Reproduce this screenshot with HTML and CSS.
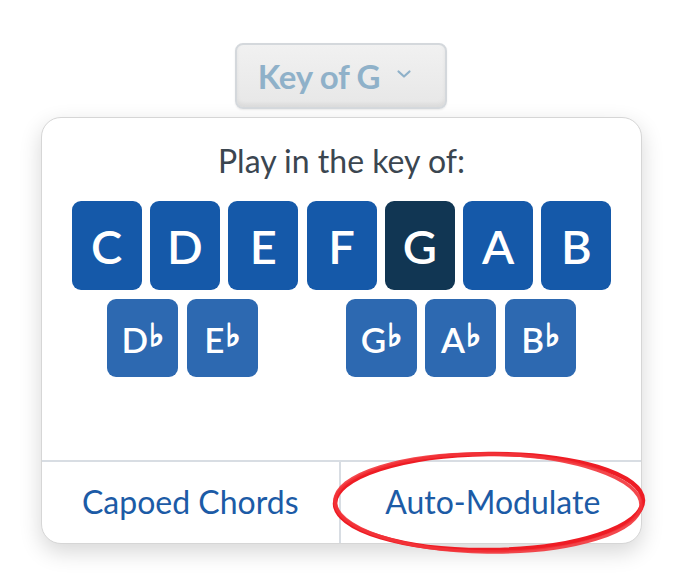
FILE: index.html
```html
<!DOCTYPE html>
<html>
<head>
<meta charset="utf-8">
<link rel="stylesheet" href="styles.css">
</head>
<body>
<div class="page">
  <div class="top">
    <div class="keybtn">
      <span class="keybtn-label">Key of G</span>
      <svg class="chev" width="16" height="10" viewBox="0 0 16 10"><path d="M2.5 2.5 L8 7.5 L13.5 2.5" fill="none" stroke="#8fb1c9" stroke-width="2.2" stroke-linecap="round" stroke-linejoin="round"/></svg>
    </div>
  </div>
  <div class="card">
    <div class="title">Play in the key of:</div>
    <div class="row row1">
      <div class="key">C</div>
      <div class="key">D</div>
      <div class="key">E</div>
      <div class="key">F</div>
      <div class="key active">G</div>
      <div class="key">A</div>
      <div class="key">B</div>
    </div>
    <div class="row row2">
      <div class="key flat">D<span class="fl">♭</span></div>
      <div class="key flat">E<span class="fl">♭</span></div>
      <div class="spacer"></div>
      <div class="key flat">G<span class="fl">♭</span></div>
      <div class="key flat">A<span class="fl">♭</span></div>
      <div class="key flat">B<span class="fl">♭</span></div>
    </div>
    <div class="footer">
      <div class="opt">Capoed Chords</div>
      <div class="opt opt-right">Auto-Modulate</div>
    </div>
  </div>
  <svg class="circle" width="330" height="120" viewBox="0 0 330 120">
    <ellipse cx="165" cy="60" rx="154" ry="48" fill="none" stroke="#ee1c24" stroke-width="4.5" transform="rotate(-0.6 165 60)"/>
    <ellipse cx="164" cy="61" rx="153" ry="49" fill="none" stroke="#f2343a" stroke-width="3.5" transform="rotate(0.8 165 60)" opacity="0.9"/>
  </svg>
</div>
</body>
</html>
```
FILE: styles.css
```css
html, body {
  margin: 0;
  padding: 0;
  background: #ffffff;
}
.page {
  position: relative;
  width: 682px;
  height: 584px;
  font-family: Lato, "Noto Sans", sans-serif;
}
.top {
  display: flex;
  justify-content: center;
  padding-top: 43px;
}
.keybtn {
  box-sizing: border-box;
  width: 212px;
  height: 66px;
  border: 2px solid #d4d8dc;
  border-radius: 8px;
  background: linear-gradient(#f1f1f1, #e7e7e7);
  box-shadow: inset 0 -3px 4px rgba(0,0,0,0.06), 0 1px 2px rgba(0,0,0,0.08);
  display: flex;
  align-items: center;
  justify-content: center;
  gap: 16px;
  padding-right: 12px;
}
.keybtn-label {
  font-weight: 700;
  font-size: 33px;
  color: #8fb1c9;
  letter-spacing: -0.3px;
}
.chev {
  margin-top: -4px;
}
.card {
  box-sizing: border-box;
  width: 601px;
  height: 427px;
  margin: 8px 0 0 41px;
  border: 1px solid #d6d6d6;
  border-radius: 20px;
  background: #fff;
  box-shadow: 0 8px 22px rgba(0,0,0,0.16);
  display: flex;
  flex-direction: column;
  align-items: center;
}
.title {
  margin-top: 24px;
  font-size: 32px;
  line-height: 38px;
  color: #3b4650;
}
.row {
  display: flex;
  gap: 8.3px;
}
.row1 {
  margin-top: 21px;
}
.row2 {
  margin-top: 9px;
  gap: 8.6px;
}
.key {
  width: 70px;
  height: 89px;
  border-radius: 9px;
  background: #1559a9;
  color: #fff;
  font-weight: 600;
  font-size: 47px;
  display: flex;
  align-items: center;
  justify-content: center;
}
.key.active {
  background: #113653;
}
.row2 .key, .spacer {
  width: 71px;
  height: 78px;
}
.key.flat {
  background: #2d69b1;
  font-size: 35px;
  padding-top: 2px;
  box-sizing: border-box;
}
.fl {
  font-family: "DejaVu Sans", sans-serif;
  font-weight: 700;
  font-size: 31px;
  margin-left: 1px;
  position: relative;
  top: -4px;
  -webkit-text-stroke: 1.6px #ffffff;
}
.footer {
  margin-top: auto;
  align-self: stretch;
  height: 81px;
  border-top: 2px solid #d8dde3;
  display: flex;
}
.opt {
  flex: 1;
  display: flex;
  align-items: center;
  justify-content: center;
  font-size: 32px;
  color: #1c5ba6;
  padding-bottom: 2px;
}
.opt-right {
  border-left: 2px solid #d8dde3;
  padding-left: 4px;
}
.circle {
  position: absolute;
  left: 324px;
  top: 442px;
}
```
